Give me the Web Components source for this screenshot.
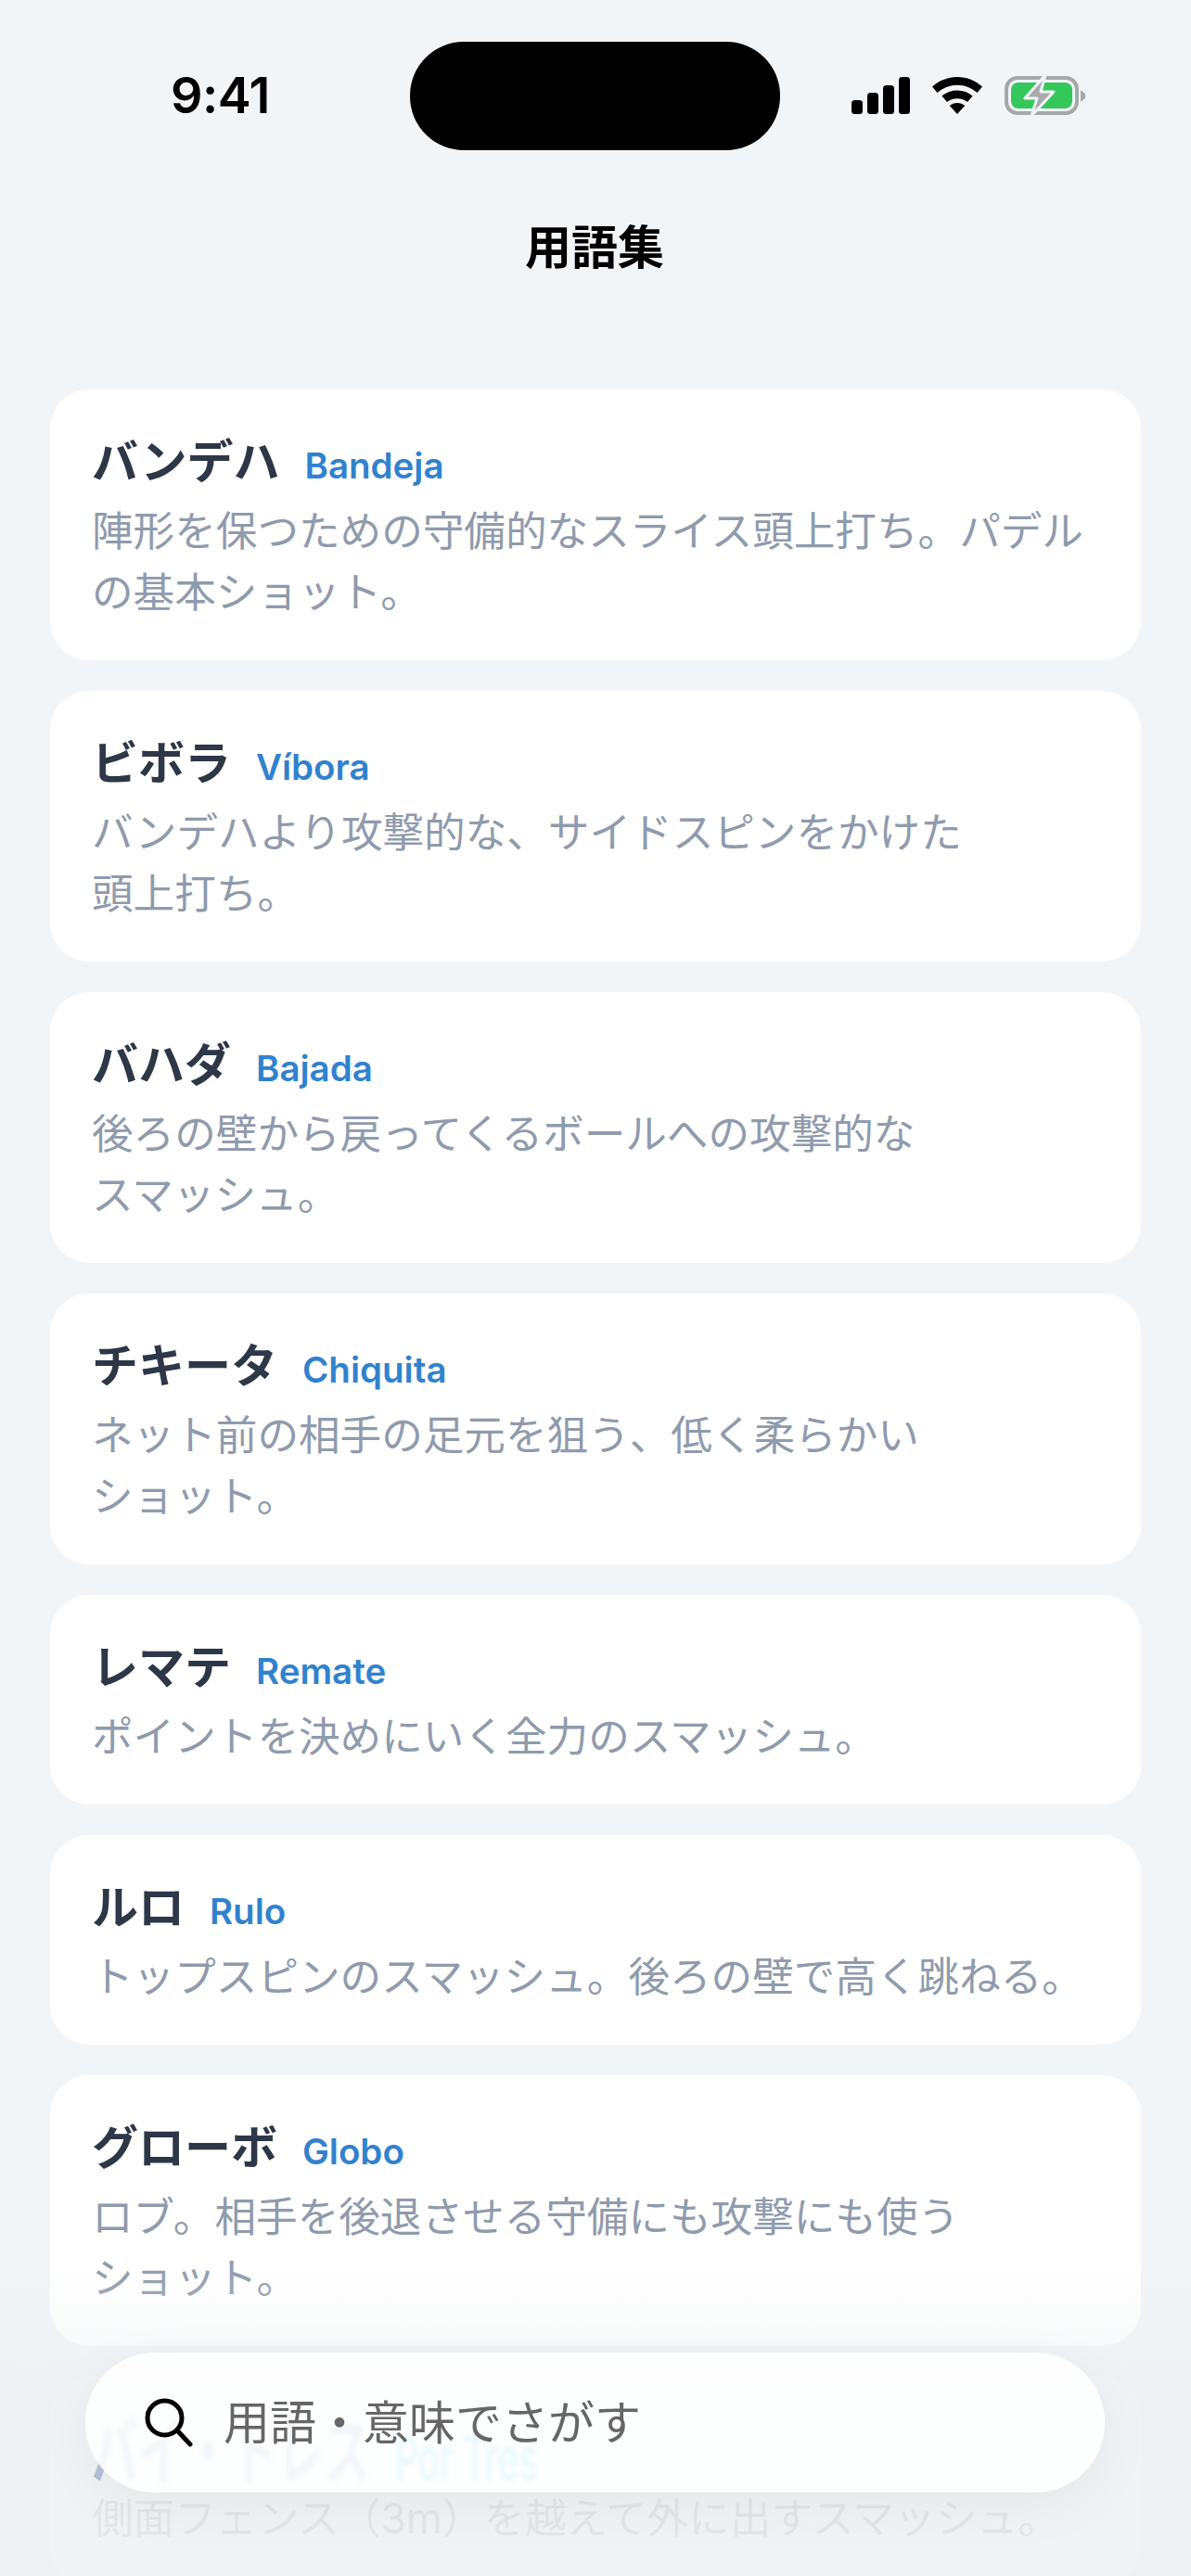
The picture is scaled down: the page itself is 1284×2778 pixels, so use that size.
<!DOCTYPE html>
<html lang="ja">
<head>
<meta charset="utf-8">
<title>用語集</title>
<style>
  html, body { margin: 0; padding: 0; background: #f2f5f8; }
  body { font-family: "Inter", "Noto Sans CJK JP", sans-serif; }
</style>
</head>
<body>
<glossary-screen>
  <status-bar slot="status"></status-bar>
  <term-card term="バンデハ" latin="Bandeja">陣形を保つための守備的なスライス頭上打ち。パデルの基本ショット。</term-card>
  <term-card term="ビボラ" latin="Víbora">バンデハより攻撃的な、サイドスピンをかけた<br>頭上打ち。</term-card>
  <term-card term="バハダ" latin="Bajada">後ろの壁から戻ってくるボールへの攻撃的な<br>スマッシュ。</term-card>
  <term-card term="チキータ" latin="Chiquita">ネット前の相手の足元を狙う、低く柔らかい<br>ショット。</term-card>
  <term-card term="レマテ" latin="Remate">ポイントを決めにいく全力のスマッシュ。</term-card>
  <term-card term="ルロ" latin="Rulo">トップスピンのスマッシュ。後ろの壁で高く跳ねる。</term-card>
  <term-card term="グローボ" latin="Globo">ロブ。相手を後退させる守備にも攻撃にも使う<br>ショット。</term-card>
  <term-card term="バイ・トレス" latin="Por Tres" refract>側面フェンス（3m）を越えて外に出すスマッシュ。</term-card>
  <search-bar slot="overlay" placeholder="用語・意味でさがす"></search-bar>
</glossary-screen>

<script>
class GlossaryScreen extends HTMLElement {
  constructor() {
    super();
    this.attachShadow({ mode: "open" });
    this.shadowRoot.innerHTML = `
      <style>
        :host {
          display: block;
          position: relative;
          width: 1284px;
          height: 2778px;
          overflow: hidden;
          background: #f2f5f8;
        }
        h1 {
          margin: 0;
          padding: 72px 2px 0 0;
          height: 258px;
          box-sizing: border-box;
          text-align: center;
          font: 700 50px/66px "Inter", "Noto Sans CJK JP", sans-serif;
          color: #000;
        }
        .list {
          display: flex;
          flex-direction: column;
          gap: 33px;
          padding: 0 54px;
        }
        /* progressive tint under the search bar */
        .fade {
          position: absolute;
          z-index: 1;
          left: 0;
          right: 0;
          bottom: 0;
          height: 338px;
          background: linear-gradient(to bottom,
            rgba(238,241,243,0) 0%,
            rgba(238,241,243,.4) 27%,
            rgba(238,241,243,.87) 38%,
            rgba(238,241,243,.87) 100%);
        }
      </style>
      <slot name="status"></slot>
      <h1>用語集</h1>
      <div class="list"><slot></slot></div>
      <div class="fade"></div>
      <slot name="overlay"></slot>
    `;
  }
}

class StatusBar extends HTMLElement {
  constructor() {
    super();
    this.attachShadow({ mode: "open" });
    this.shadowRoot.innerHTML = `
      <style>
        :host {
          display: flex;
          align-items: center;
          height: 162px;
          padding: 44px 0 0 184px;
          box-sizing: border-box;
          font: 600 54px/60px "Inter", sans-serif;
          color: #000;
        }
        .time { width: 258px; letter-spacing: -0.5px; }
        .island {
          width: 399px;
          height: 117px;
          border-radius: 58px;
          background: #000;
        }
        .icons {
          display: flex;
          align-items: center;
          gap: 24px;
          margin-left: 77px;
        }
      </style>
      <span class="time">9:41</span>
      <div class="island"></div>
      <div class="icons">
        <svg width="63" height="40" viewBox="0 0 63 40" fill="#000">
          <rect x="0" y="25" width="12" height="15" rx="3.5"/>
          <rect x="17" y="17" width="12" height="23" rx="3.5"/>
          <rect x="34" y="9" width="12" height="31" rx="3.5"/>
          <rect x="51" y="0" width="12" height="40" rx="3.5"/>
        </svg>
        <svg width="54" height="40" viewBox="0 0 54 40" fill="#000">
          <path d="M27 0C16.500 0 7.500 4 0 10.500l5.500 6.500C11.500 12 18.500 8.800 27 8.800S42.500 12 48.500 17l5.500-6.500C46.500 4 37.500 0 27 0z"/>
          <path d="M27 14.500c-6.500 0-12 2.200-16.500 6l5.500 6.500c3-2.400 6.700-3.800 11-3.800s8 1.400 11 3.800l5.500-6.500c-4.500-3.800-10-6-16.500-6z"/>
          <path d="M27 28c-3.200 0-6 1.100-8.200 2.900L27 40l8.200-9.100C33 29.100 30.200 28 27 28z"/>
        </svg>
        <svg width="88" height="44" viewBox="0 0 88 44">
          <rect x="2" y="3" width="76" height="38" rx="12" fill="none" stroke="#a5a7a9" stroke-width="4"/>
          <rect x="7" y="8" width="66" height="28" rx="7.500" fill="#34c85a"/>
          <path d="M82 16l5 4v5l-5 4z" fill="#a5a7a9"/>
          <path d="M44 0L22 25h13l-6 19 24-26H39z" fill="#a8aaac" stroke="#f2f5f8" stroke-width="3" stroke-linejoin="round"/>
        </svg>
      </div>
    `;
  }
}

class TermCard extends HTMLElement {
  constructor() {
    super();
    this.attachShadow({ mode: "open" });
    const term = this.getAttribute("term");
    const latin = this.getAttribute("latin");
    this.shadowRoot.innerHTML = `
      <style>
        :host {
          display: block;
          padding: 42px 44px 40px 45px;
          background: #fff;
          border-radius: 42px;
        }
        .head {
          display: flex;
          align-items: baseline;
          gap: 27px;
          height: 78px;
        }
        .term {
          font: 700 50px/72px "Inter", "Noto Sans CJK JP", sans-serif;
          color: #2d3748;
        }
        .latin {
          font: 600 38.5px/72px "Inter", sans-serif;
          color: #3182ce;
        }
        p {
          margin: 0;
          font: 400 44.6px/66px "Inter", "Noto Sans CJK JP", sans-serif;
          color: #8f9bad;
        }
        /* title seen through the glass bar: stretched and tinted */
        :host([refract]) .head { position: relative; z-index: 2; }
        :host([refract]) .term {
          color: #b4c0d8;
          transform: translateY(-18px) scaleY(1.6);
          transform-origin: 50% 0;
        }
        :host([refract]) .latin {
          color: #7dd4ff;
          transform: translateY(-22px) scaleY(1.75);
          transform-origin: 50% 0;
        }
      </style>
      <div class="head">
        <span class="term">${term}</span>
        <span class="latin">${latin}</span>
      </div>
      <p><slot></slot></p>
    `;
  }
}

class SearchBar extends HTMLElement {
  constructor() {
    super();
    this.attachShadow({ mode: "open" });
    this.shadowRoot.innerHTML = `
      <style>
        :host {
          position: absolute;
          z-index: 3;
          left: 92px;
          top: 2537px;
          width: 1099px;
          height: 151px;
          box-sizing: border-box;
          display: flex;
          align-items: center;
          padding: 0 0 0 64px;
          border-radius: 75px;
          background: rgba(255,255,255,.85);
          backdrop-filter: blur(2px);
          box-shadow: 0 14px 60px rgba(0,0,0,.05);
        }
        svg { flex: none; margin-right: 33px; }
        span {
          font: 400 50px/60px "Inter", "Noto Sans CJK JP", sans-serif;
          color: #666;
        }
      </style>
      <svg width="52" height="54" viewBox="0 0 52 54" fill="none" stroke="#000" stroke-width="5">
        <circle cx="21.500" cy="21.500" r="18.500"/>
        <path d="M35 35l14 15" stroke-linecap="round"/>
      </svg>
      <span>${this.getAttribute("placeholder")}</span>
    `;
  }
}

customElements.define("glossary-screen", GlossaryScreen);
customElements.define("status-bar", StatusBar);
customElements.define("term-card", TermCard);
customElements.define("search-bar", SearchBar);
</script>
</body>
</html>
